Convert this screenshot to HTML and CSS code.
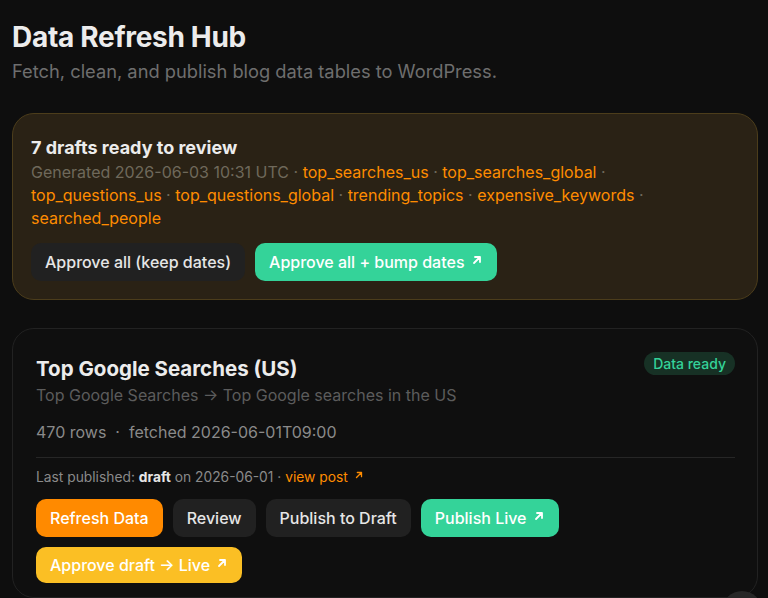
FILE: index.html
```html
<!DOCTYPE html>
<html>
<head>
<meta charset="utf-8">
<link rel="stylesheet" href="styles.css">
</head>
<body>
<header class="head">
  <h1 class="title">Data Refresh Hub</h1>
  <p class="subtitle">Fetch, clean, and publish blog data tables to WordPress.</p>
</header>

<section class="banner">
  <h2 class="banner-title">7 drafts ready to review</h2>
  <p class="banner-meta">Generated 2026-06-03 10:31 UTC <span class="sep">·</span> <a class="link">top_searches_us</a> <span class="sep">·</span> <a class="link">top_searches_global</a> <span class="sep">·</span> <a class="link">top_questions_us</a> <span class="sep">·</span> <a class="link">top_questions_global</a> <span class="sep">·</span> <a class="link">trending_topics</a> <span class="sep">·</span> <a class="link">expensive_keywords</a> <span class="sep">·</span> <a class="link">searched_people</a></p>
  <div class="btn-row">
    <button class="btn btn-dark">Approve all (keep dates)</button>
    <button class="btn btn-green">Approve all + bump dates <svg class="arr" viewBox="0 0 12 12"><path d="M3 9 L9 3 M4 3 H9 V8"/></svg></button>
  </div>
</section>

<section class="card">
  <div class="card-top">
    <div>
      <h2 class="card-title">Top Google Searches (US)</h2>
      <p class="card-sub">Top Google Searches → Top Google searches in the US</p>
    </div>
    <span class="badge">Data ready</span>
  </div>
  <p class="card-stats">470 rows &nbsp;·&nbsp; fetched 2026-06-01T09:00</p>
  <div class="divider"></div>
  <p class="last">Last published: <b>draft</b> on 2026-06-01 · <a class="link">view post <svg class="arr-s" viewBox="0 0 12 12"><path d="M3 9 L9 3 M4 3 H9 V8"/></svg></a></p>
  <div class="btn-wrap">
    <button class="btn btn-orange">Refresh Data</button>
    <button class="btn btn-dark">Review</button>
    <button class="btn btn-dark">Publish to Draft</button>
    <button class="btn btn-green">Publish Live <svg class="arr" viewBox="0 0 12 12"><path d="M3 9 L9 3 M4 3 H9 V8"/></svg></button>
    <button class="btn btn-yellow">Approve draft → Live <svg class="arr" viewBox="0 0 12 12"><path d="M3 9 L9 3 M4 3 H9 V8"/></svg></button>
  </div>
</section>

<div class="fab"></div>
</body>
</html>
```
FILE: styles.css
```css
* { box-sizing: border-box; }
html, body { background: #0e0e0e; }
body {
  margin: 0;
  padding: 20px 10px 40px 12px;
  font-family: Inter, "Noto Sans", sans-serif;
  color: #ececec;
}
.head { margin-bottom: 29px; }
.title {
  margin: 0;
  font-size: 28px;
  font-weight: 700;
  line-height: 34px;
  color: #ececec;
  letter-spacing: -0.3px;
}
.subtitle {
  margin: 5px 0 0;
  font-size: 18.3px;
  line-height: 25px;
  color: #6e6e6e;
}
.banner {
  background: #2a2215;
  border: 1px solid #4c3d1b;
  border-radius: 22px;
  padding: 21px 18px 18px 18px;
}
.banner-title {
  margin: 0;
  font-size: 18px;
  font-weight: 700;
  line-height: 26px;
  color: #ececec;
}
.banner-meta {
  margin: 0;
  font-size: 16px;
  line-height: 23px;
  color: #6f695b;
}
.link { color: #ff8c00; text-decoration: none; }
.sep { color: #6f695b; }
.btn-row { display: flex; gap: 10px; margin-top: 13px; }
.btn {
  font-family: Inter, "Noto Sans", sans-serif;
  font-size: 16px;
  font-weight: 500;
  border: none;
  border-radius: 10px;
  height: 38px;
  padding: 0 14px;
  color: #f2f2f2;
  cursor: pointer;
  display: inline-flex;
  align-items: center;
  gap: 6px;
}
.btn-dark { background: #212121; color: #e6e6e6; }
.btn-green { background: #34d399; color: #ffffff; }
.btn-orange { background: #ff8a00; color: #ffffff; }
.btn-yellow { background: #fbbf24; color: #ffffff; height: 36px; }
.arr {
  width: 12px;
  height: 12px;
  margin-top: -4px;
  fill: none;
  stroke: currentColor;
  stroke-width: 1.8;
  stroke-linecap: round;
  stroke-linejoin: round;
}
.arr-s {
  width: 10px;
  height: 10px;
  margin-left: 2px;
  vertical-align: 2px;
  fill: none;
  stroke: currentColor;
  stroke-width: 1.6;
  stroke-linecap: round;
  stroke-linejoin: round;
}
.card {
  margin-top: 28px;
  background: #0f0f0f;
  border: 1px solid #222222;
  border-radius: 22px;
  padding: 25px 22px 14px 23px;
}
.card-top { display: flex; justify-content: space-between; align-items: flex-start; }
.card-title {
  margin: 0;
  font-size: 20.5px;
  font-weight: 700;
  line-height: 29px;
  color: #ececec;
}
.card-sub {
  margin: 0;
  font-size: 16px;
  line-height: 24px;
  color: #5c5c5c;
}
.badge {
  margin-top: -2px;
  background: #173125;
  color: #34d399;
  font-size: 14px;
  font-weight: 500;
  line-height: 23px;
  padding: 0 9px;
  border-radius: 12px;
}
.card-stats {
  margin: 13px 0 0;
  font-size: 16px;
  line-height: 24px;
  color: #8a8a8a;
}
.divider { height: 1px; background: #262626; margin: 13px 0 9px; }
.last {
  margin: 0;
  font-size: 13.8px;
  line-height: 20px;
  color: #8a8a8a;
}
.last b { color: #e6e6e6; font-weight: 700; }
.btn-wrap { display: flex; flex-wrap: wrap; gap: 10px; margin-top: 12px; max-width: 600px; }
.fab {
  position: fixed;
  left: 722px;
  top: 591px;
  width: 40px;
  height: 40px;
  border-radius: 50%;
  background: #272727;
}
```
